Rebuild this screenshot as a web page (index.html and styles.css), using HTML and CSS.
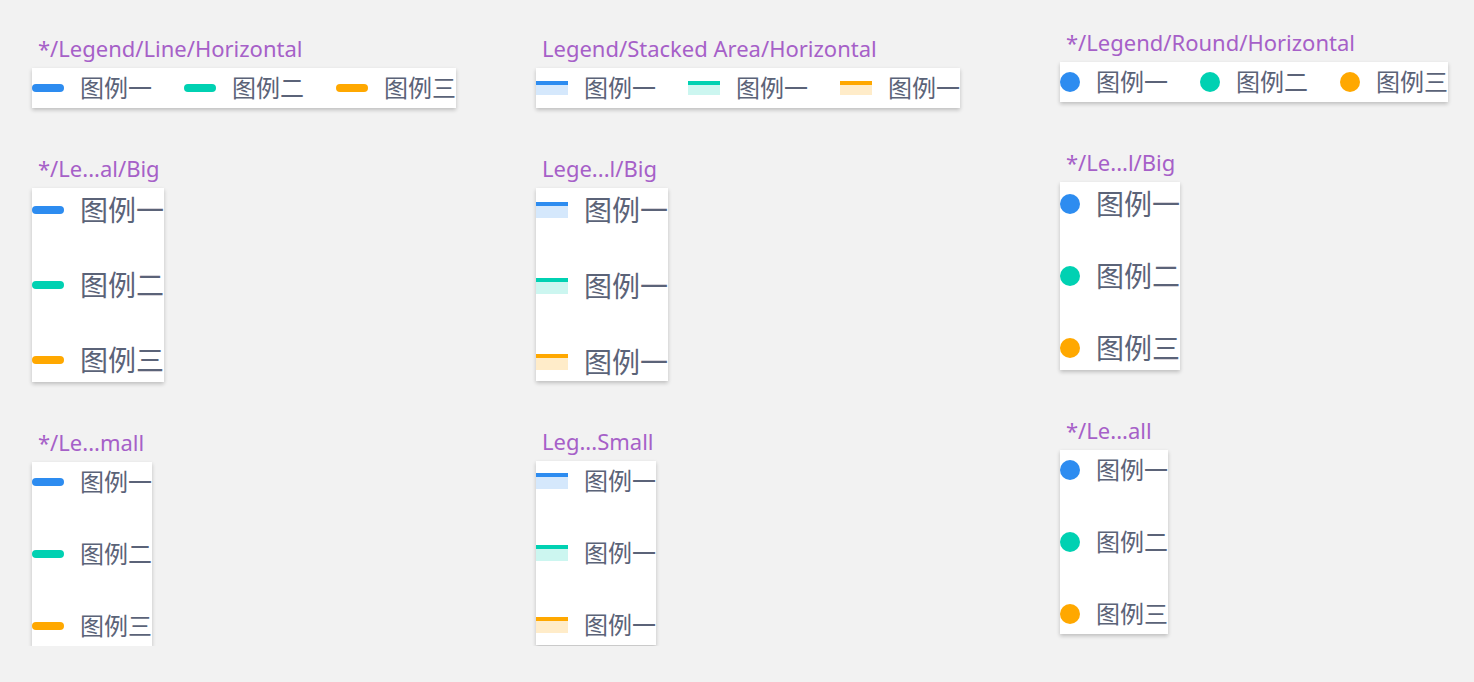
FILE: index.html
```html
<!DOCTYPE html>
<html lang="zh">
<head>
<meta charset="utf-8">
<title>Legend</title>
<link rel="stylesheet" href="styles.css">
</head>
<body>
<div class="page">
  <div class="col col-a">
    <div class="comp">
      <div class="title">*/Legend/Line/Horizontal</div>
      <div class="legend horiz">
        <div class="item"><span class="mk line blue"></span><span class="lbl">图例一</span></div>
        <div class="item"><span class="mk line green"></span><span class="lbl">图例二</span></div>
        <div class="item"><span class="mk line orange"></span><span class="lbl">图例三</span></div>
      </div>
    </div>
    <div class="comp">
      <div class="title">*/Le...al/Big</div>
      <div class="legend vert big line-big">
        <div class="item"><span class="mk line blue"></span><span class="lbl">图例一</span></div>
        <div class="item"><span class="mk line green"></span><span class="lbl">图例二</span></div>
        <div class="item"><span class="mk line orange"></span><span class="lbl">图例三</span></div>
      </div>
    </div>
    <div class="comp">
      <div class="title">*/Le...mall</div>
      <div class="legend vert small">
        <div class="item"><span class="mk line blue"></span><span class="lbl">图例一</span></div>
        <div class="item"><span class="mk line green"></span><span class="lbl">图例二</span></div>
        <div class="item"><span class="mk line orange"></span><span class="lbl">图例三</span></div>
      </div>
    </div>
  </div>

  <div class="col col-b">
    <div class="comp">
      <div class="title">Legend/Stacked Area/Horizontal</div>
      <div class="legend horiz">
        <div class="item"><span class="mk area blue"></span><span class="lbl">图例一</span></div>
        <div class="item"><span class="mk area green"></span><span class="lbl">图例一</span></div>
        <div class="item"><span class="mk area orange"></span><span class="lbl">图例一</span></div>
      </div>
    </div>
    <div class="comp">
      <div class="title">Lege...l/Big</div>
      <div class="legend vert big area-big">
        <div class="item"><span class="mk area tall blue"></span><span class="lbl">图例一</span></div>
        <div class="item"><span class="mk area tall green"></span><span class="lbl">图例一</span></div>
        <div class="item"><span class="mk area tall orange"></span><span class="lbl">图例一</span></div>
      </div>
    </div>
    <div class="comp">
      <div class="title">Leg...Small</div>
      <div class="legend vert small">
        <div class="item"><span class="mk area tall blue"></span><span class="lbl">图例一</span></div>
        <div class="item"><span class="mk area tall green"></span><span class="lbl">图例一</span></div>
        <div class="item"><span class="mk area tall orange"></span><span class="lbl">图例一</span></div>
      </div>
    </div>
  </div>

  <div class="col col-c">
    <div class="comp">
      <div class="title">*/Legend/Round/Horizontal</div>
      <div class="legend horiz">
        <div class="item"><span class="mk dot blue"></span><span class="lbl">图例一</span></div>
        <div class="item"><span class="mk dot green"></span><span class="lbl">图例二</span></div>
        <div class="item"><span class="mk dot orange"></span><span class="lbl">图例三</span></div>
      </div>
    </div>
    <div class="comp">
      <div class="title">*/Le...l/Big</div>
      <div class="legend vert big round-big">
        <div class="item"><span class="mk dot blue"></span><span class="lbl">图例一</span></div>
        <div class="item"><span class="mk dot green"></span><span class="lbl">图例二</span></div>
        <div class="item"><span class="mk dot orange"></span><span class="lbl">图例三</span></div>
      </div>
    </div>
    <div class="comp">
      <div class="title">*/Le...all</div>
      <div class="legend vert small">
        <div class="item"><span class="mk dot blue"></span><span class="lbl">图例一</span></div>
        <div class="item"><span class="mk dot green"></span><span class="lbl">图例二</span></div>
        <div class="item"><span class="mk dot orange"></span><span class="lbl">图例三</span></div>
      </div>
    </div>
  </div>
</div>
</body>
</html>
```

FILE: styles.css
```css
html, body {
  margin: 0;
  padding: 0;
  background: #f2f2f2;
}

.page {
  display: flex;
  align-items: flex-start;
  padding-left: 32px;
  font-family: "Noto Sans", "Noto Sans CJK SC", sans-serif;
}

.col {
  display: flex;
  flex-direction: column;
  align-items: flex-start;
  gap: 46px;
}

.col-a { width: 504px; padding-top: 34px; }
.col-b { width: 524px; padding-top: 34px; }
.col-c { padding-top: 28px; }

.comp {
  display: flex;
  flex-direction: column;
  align-items: flex-start;
}

.title {
  font-size: 22px;
  line-height: 28px;
  height: 28px;
  color: #a660c8;
  margin-left: 6px;
  margin-bottom: 6px;
  white-space: nowrap;
}

.legend {
  display: flex;
  background: #ffffff;
  box-shadow: 0 2px 4px rgba(0, 0, 0, 0.22);
  overflow: hidden;
}

.legend .item {
  display: flex;
  align-items: center;
  gap: 16px;
  flex: none;
}

.lbl {
  font-family: "Noto Sans CJK SC", sans-serif;
  color: #5b6378;
  white-space: nowrap;
  font-size: 24px;
  line-height: 1;
  padding-bottom: 0.1em;
}

/* Horizontal */
.horiz {
  height: 40px;
  align-items: center;
  gap: 32px;
}

/* Vertical */
.vert {
  flex-direction: column;
}

.vert.small {
  gap: 32px;
}
.vert.small .item { height: 40px; }

.vert.big .lbl {
  font-size: 28px;
}

.line-big { gap: 31px; }
.line-big .item { height: 44px; }

.area-big { gap: 38px; padding-top: 3px; }
.area-big .item { height: 38px; }

.round-big { gap: 28px; }
.round-big .item { height: 44px; }

/* Markers */
.mk { display: block; flex: none; }

.line {
  width: 32px;
  height: 8px;
  border-radius: 4px;
}
.line.blue { background: #2d8cf0; }
.line.green { background: #00d1b2; }
.line.orange { background: #ffa800; }

.area {
  width: 32px;
  height: 10px;
  border-top: 4px solid;
}
.area.tall { height: 12px; }
.area.blue { border-top-color: #2d8cf0; background: #d5e8fc; }
.area.green { border-top-color: #00d1b2; background: #ccf6f0; }
.area.orange { border-top-color: #ffa800; background: #ffecc9; }

.dot {
  width: 20px;
  height: 20px;
  border-radius: 50%;
}
.dot.blue { background: #2d8cf0; }
.dot.green { background: #00d1b2; }
.dot.orange { background: #ffa800; }
```
